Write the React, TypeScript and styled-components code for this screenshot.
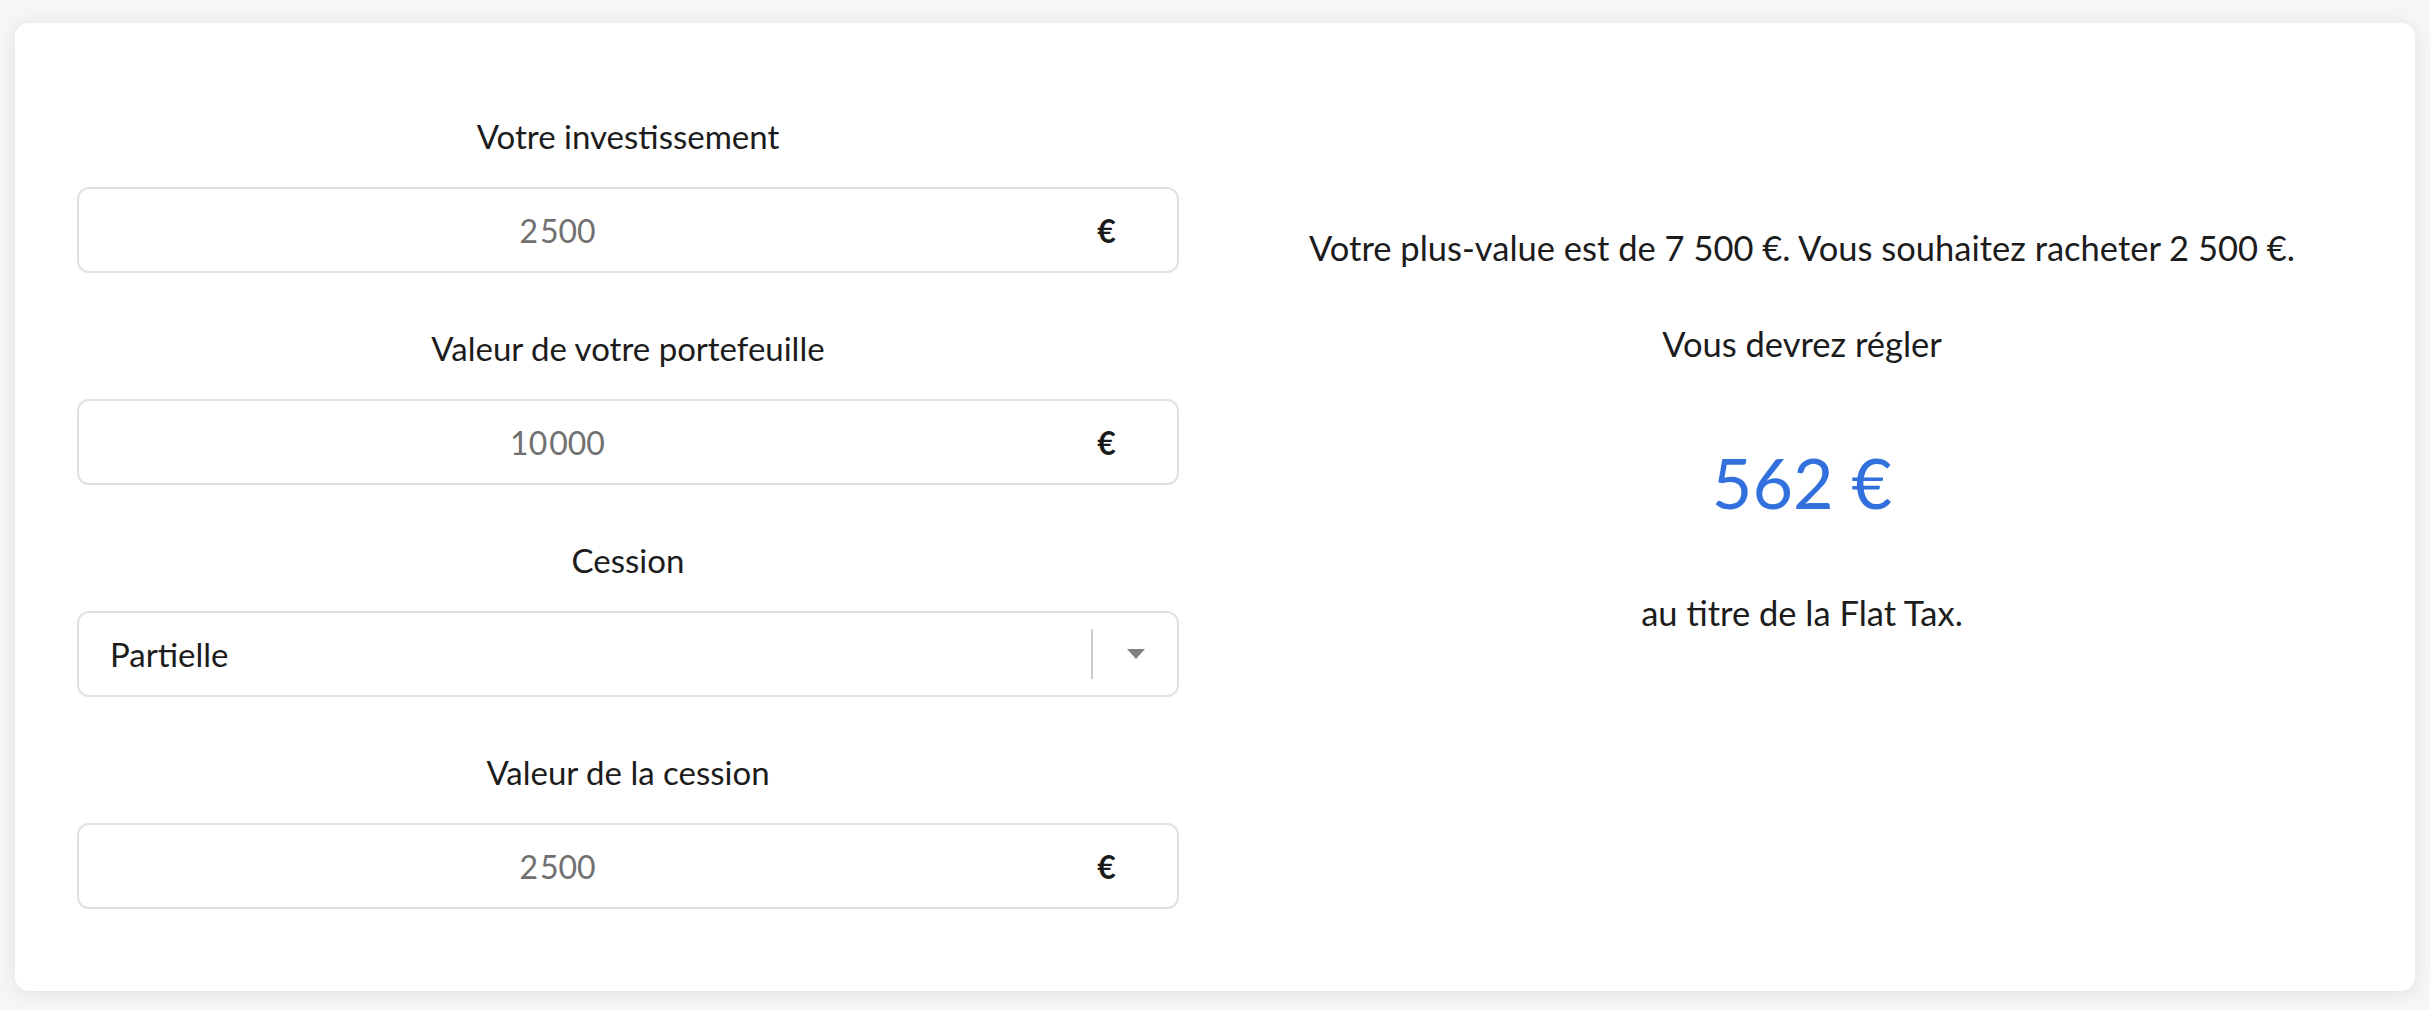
import React from "react";
import styled, { createGlobalStyle } from "styled-components";

const GlobalStyle = createGlobalStyle`
  html, body {
    margin: 0;
    padding: 0;
    background: #f6f6f6;
  }
  body {
    font-family: Lato, "Liberation Sans", "Noto Sans", sans-serif;
    color: #1c1c1c;
  }
  * { box-sizing: border-box; }
`;

const Page = styled.div`
  padding: 23px 15px 18px 15px;
`;

const Card = styled.div`
  background: #ffffff;
  border-radius: 14px;
  box-shadow: 0 2px 18px rgba(0, 0, 0, 0.09);
  padding: 89px 62px 82px 62px;
  display: flex;
  gap: 72px;
`;

const FormColumn = styled.div`
  width: 1102px;
  flex: none;
  display: flex;
  flex-direction: column;
`;

const Field = styled.div<{ $last?: boolean }>`
  display: flex;
  flex-direction: column;
  margin-bottom: ${(p) => (p.$last ? "0" : "51px")};
`;

const Label = styled.label`
  display: block;
  text-align: center;
  font-size: 33px;
  line-height: 48px;
  height: 48px;
  margin-bottom: 27px;
  color: #1c1c1c;
`;

const InputBox = styled.div`
  height: 86px;
  border: 2px solid #e0e0e0;
  border-radius: 12px;
  display: flex;
  align-items: center;
  background: #fff;
`;

const ValueInput = styled.input`
  flex: 1;
  min-width: 0;
  border: none;
  outline: none;
  background: transparent;
  text-align: center;
  font-family: inherit;
  font-size: 32px;
  color: #707070;
  padding: 0;
`;

const Suffix = styled.span`
  width: 141px;
  flex: none;
  text-align: center;
  font-size: 32px;
  font-weight: 700;
  color: #1a1a1a;
`;

const SelectBox = styled(InputBox)`
  padding-left: 31px;
`;

const SelectValue = styled.span`
  flex: 1;
  font-size: 33px;
  color: #1c1c1c;
`;

const Indicator = styled.div`
  width: 86px;
  height: 50px;
  flex: none;
  border-left: 2px solid #cccccc;
  display: flex;
  align-items: center;
  justify-content: center;
`;

const Arrow = styled.span`
  width: 0;
  height: 0;
  border-left: 9px solid transparent;
  border-right: 9px solid transparent;
  border-top: 10px solid #808080;
  margin-left: 2px;
`;

const ResultColumn = styled.div`
  flex: 1;
  display: flex;
  flex-direction: column;
  align-items: center;
  padding-top: 112px;
`;

const Line = styled.p<{ $gap?: number }>`
  margin: 0 0 ${(p) => p.$gap ?? 0}px 0;
  font-size: 34.5px;
  line-height: 48px;
  text-align: center;
  white-space: nowrap;
  color: #1c1c1c;
`;

const Amount = styled.p`
  margin: 0 0 54px 0;
  font-size: 70px;
  line-height: 105px;
  color: #3170dd;
  text-align: center;
`;

type NumFieldProps = { label: string; value: string; last?: boolean };

const NumberField = ({ label, value, last }: NumFieldProps) => (
  <Field $last={last}>
    <Label>{label}</Label>
    <InputBox>
      <ValueInput readOnly value={value} />
      <Suffix>€</Suffix>
    </InputBox>
  </Field>
);

export default function App() {
  return (
    <>
      <GlobalStyle />
      <Page>
        <Card>
          <FormColumn>
            <NumberField label="Votre investissement" value={"2\u200A500"} />
            <NumberField label="Valeur de votre portefeuille" value={"10\u200A000"} />
            <Field>
              <Label>Cession</Label>
              <SelectBox>
                <SelectValue>Partielle</SelectValue>
                <Indicator>
                  <Arrow />
                </Indicator>
              </SelectBox>
            </Field>
            <NumberField label="Valeur de la cession" value={"2\u200A500"} last />
          </FormColumn>
          <ResultColumn>
            <Line $gap={48}>
              Votre plus-value est de 7 500 €. Vous souhaitez racheter 2 500 €.
            </Line>
            <Line $gap={62}>Vous devrez régler</Line>
            <Amount>562 €</Amount>
            <Line>au titre de la Flat Tax.</Line>
          </ResultColumn>
        </Card>
      </Page>
    </>
  );
}
